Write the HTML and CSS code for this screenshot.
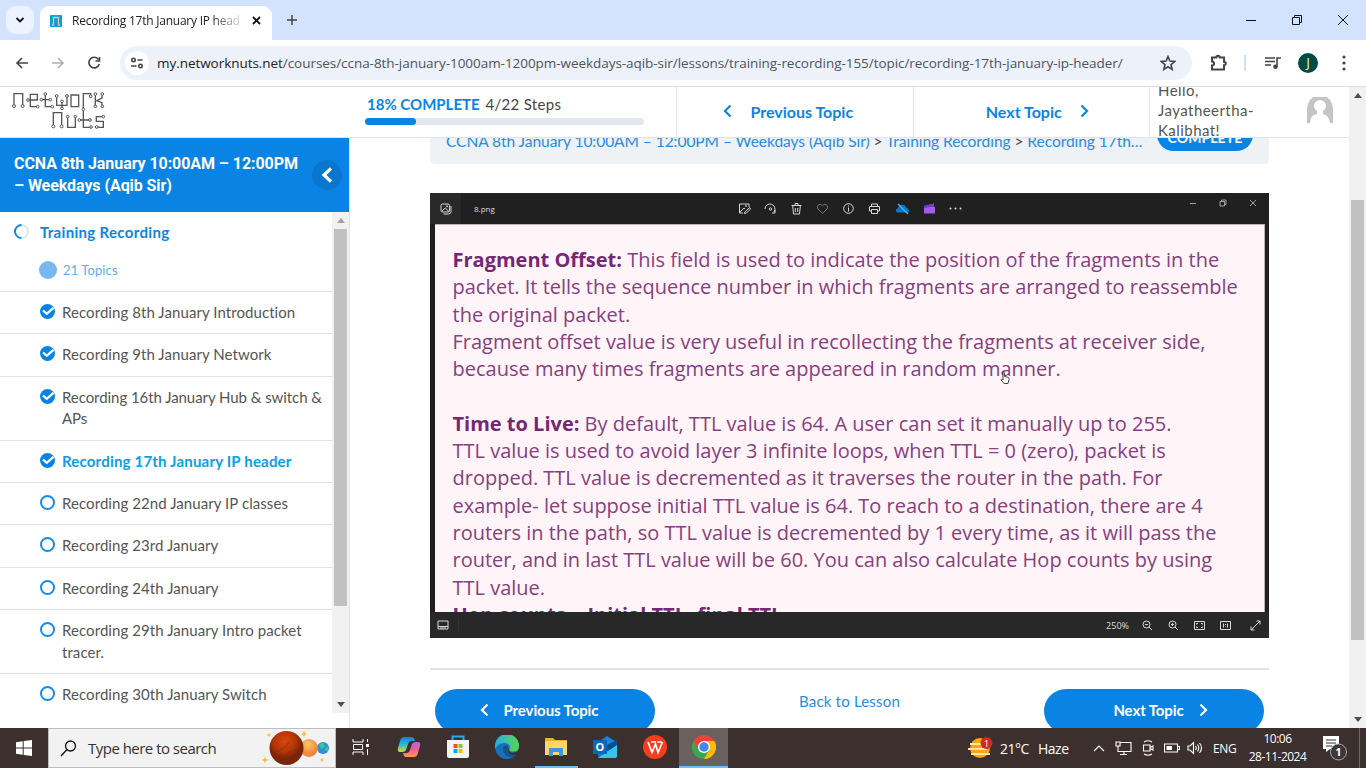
FILE: index.html
```html
<!DOCTYPE html>
<html lang="en">
<head>
<meta charset="utf-8">
<title>Recording 17th January IP header</title>
<link rel="stylesheet" href="styles.css">
</head>
<body>
<div class="tabs">
  <div class="tabmenu"><svg width="10" height="8" viewBox="0 0 10 8"><path d="M1.5 2 5 5.5 8.500 2" class="k2"/></svg></div>
  <div class="tab">
    <svg width="12" height="12" viewBox="0 0 12 12"><rect width="12" height="12" rx="1" fill="#049fdf"/><path d="M3.500 10V2.500H8.500V10M2 10H4M8 10H10" fill="none" stroke="#e9c6a0" stroke-width="1.300"/></svg>
    <span class="tabtitle">Recording 17th January IP head</span>
    <svg class="tabx" width="9" height="9" viewBox="0 0 9 9"><path d="M1 1 8 8M8 1 1 8" class="k2"/></svg>
  </div>
  <svg class="plus" width="12" height="12" viewBox="0 0 12 12"><path d="M6 1V11M1 6H11" fill="none" stroke="#444" stroke-width="1.500"/></svg>
  <div class="wincontrols">
    <svg width="12" height="12" viewBox="0 0 12 12"><path d="M1 6.500H11" class="k1"/></svg>
    <svg width="12" height="12" viewBox="0 0 12 12"><path d="M1.500 3.500H8.500V10.500H1.500ZM3.500 3.500V1.500H10.500V8.500H8.500" class="k1"/></svg>
    <svg width="12" height="12" viewBox="0 0 12 12"><path d="M1 1 11 11M11 1 1 11" class="k1"/></svg>
  </div>
</div>
<div class="toolbar">
  <svg width="14" height="12" viewBox="0 0 14 12"><path d="M13 6H2M7 1 2 6 7 11" class="nav"/></svg>
  <svg width="14" height="12" viewBox="0 0 14 12"><path d="M1 6H12M7 1 12 6 7 11" class="nav off"/></svg>
  <svg width="14" height="14" viewBox="0 0 14 14"><path d="M11.500 3.500A5.300 5.300 0 1 0 12.300 8M12.500 1V5H8.500" class="nav"/></svg>
  <div class="address">
    <div class="site"><svg width="14" height="12" viewBox="0 0 14 12"><g class="nav"><circle cx="3.500" cy="3" r="1.700"/><path d="M7.500 3H12.500M1 9H6.500"/><circle cx="10.500" cy="9" r="1.700"/></g></svg></div>
    <span class="url"><b>my.networknuts.net</b>/courses/ccna-8th-january-1000am-1200pm-weekdays-aqib-sir/lessons/training-recording-155/topic/recording-17th-january-ip-header/</span>
    <svg class="star" width="16" height="16" viewBox="0 0 16 16"><path d="M8 1.500 9.900 6.100 14.800 6.400 11 9.600 12.200 14.400 8 11.800 3.800 14.400 5 9.600 1.200 6.400 6.100 6.100Z" class="nav"/></svg>
  </div>
  <div class="tools">
    <svg width="18" height="18" viewBox="0 0 18 18"><path d="M2 3.500H6.300A1.700 1.700 0 0 1 9.700 3.500H14V7.700A1.700 1.700 0 0 1 14 11.300V15.500H2V11.500A2 2 0 0 0 2 7.500Z" class="nav ext"/></svg>
    <i class="toolsep"></i>
    <svg width="16" height="14" viewBox="0 0 16 14"><path d="M0 2H10M0 5.500H10M0 9H6M12 10.500V2H16" class="nav"/><circle cx="10.500" cy="10.800" r="2.300" fill="#444"/></svg>
    <span class="profile">J</span>
    <svg width="4" height="16" viewBox="0 0 4 16" fill="#444"><circle cx="2" cy="2" r="1.600"/><circle cx="2" cy="8" r="1.600"/><circle cx="2" cy="14" r="1.600"/></svg>
  </div>
</div>
<div class="page">
  <div class="view">
    <header class="head">
      <div class="logo">
        <svg width="97" height="40" viewBox="30 270 291 120" fill="none" stroke="#555" stroke-width="4">
          <path d="M42 314V281H68V314M87 300H112V283H91V320H112M127 299H148M136 284V320H154M170 292V316H201V292M186 306V322M213 285H236V320H213ZM250 324V281H272V287M286 286V320M306 286V294L290 302L306 308V316"/>
          <path d="M160 376V338H185V376M203 354V382H226V354M241 360H268M250 333V382H271M309 350H289V364H310V382H291"/>
          <g stroke-width="3" fill="#fff"><circle cx="42" cy="318" r="4.500"/><circle cx="68" cy="318" r="4.500"/><circle cx="84" cy="300" r="4"/><circle cx="113" cy="320" r="4"/><circle cx="124" cy="299" r="4"/><circle cx="151" cy="299" r="4"/><circle cx="136" cy="282" r="4"/><circle cx="157" cy="320" r="4"/><circle cx="170" cy="288" r="4"/><circle cx="201" cy="288" r="4"/><circle cx="186" cy="304" r="4"/><circle cx="186" cy="325" r="4"/><circle cx="272" cy="289" r="4"/><circle cx="250" cy="328" r="4"/><circle cx="286" cy="282" r="4"/><circle cx="307" cy="282" r="4"/><circle cx="286" cy="319" r="4"/><circle cx="307" cy="319" r="4"/><circle cx="160" cy="379" r="4.500"/><circle cx="185" cy="379" r="4.500"/><circle cx="203" cy="350" r="4"/><circle cx="226" cy="350" r="4"/><circle cx="238" cy="360" r="4"/><circle cx="270" cy="360" r="4"/><circle cx="273" cy="381" r="4"/><circle cx="310" cy="350" r="4"/><circle cx="290" cy="381" r="4"/></g>
        </svg>
      </div>
      <div class="progress"><div class="ptext"><b>18% COMPLETE</b> <span>4/22 Steps</span></div><div class="bar"><i></i></div></div>
      <div class="hnav prev"><svg width="9" height="14" viewBox="0 0 9 14"><path d="M7.500 1.500 2 7 7.500 12.500" class="chev"/></svg><span>Previous Topic</span></div>
      <div class="hnav next"><span>Next Topic</span><svg width="9" height="14" viewBox="0 0 9 14"><path d="M1.500 1.500 7 7 1.500 12.500" class="chev"/></svg></div>
      <div class="user"><span>Hello,<br>Jayatheertha-<br>Kalibhat!</span>
        <svg width="26" height="26" viewBox="0 0 26 26"><path d="M6 0H20Q26 5 26 13V26H23Q22 18 16 17V14Q19 12 19 9A6 6 0 0 0 7 9Q7 12 10 14V17Q3 18 3 26H0V13Q0 5 6 0Z" fill="#c4c4c4"/></svg></div>
    </header>
    <div class="body">
      <aside class="side">
        <div class="course"><h1>CCNA 8th January 10:00AM – 12:00PM<br>– Weekdays (Aqib Sir)</h1><span class="collapse"><svg width="12" height="16" viewBox="0 0 12 16"><path d="M10 1.500 3 8 10 14.500" fill="none" stroke="#fff" stroke-width="3.200"/></svg></span></div>
        <div class="scroll">
          <div class="list">
            <div class="lesson"><i class="ring"></i><b>Training Recording</b></div>
            <div class="count"><i></i>21 Topics</div>
            <div class="row"><svg class="done" viewBox="0 0 15 15"><circle cx="7.500" cy="7.500" r="7.500"/><path d="M3 6.500 6.700 9.800 13.500 3.800"/></svg><span>Recording 8th January Introduction</span></div>
            <div class="row"><svg class="done" viewBox="0 0 15 15"><circle cx="7.500" cy="7.500" r="7.500"/><path d="M3 6.500 6.700 9.800 13.500 3.800"/></svg><span>Recording 9th January Network</span></div>
            <div class="row"><svg class="done" viewBox="0 0 15 15"><circle cx="7.500" cy="7.500" r="7.500"/><path d="M3 6.500 6.700 9.800 13.500 3.800"/></svg><span class="tight">Recording 16th January Hub &amp; switch &amp;<br>APs</span></div>
            <div class="row current"><svg class="done" viewBox="0 0 15 15"><circle cx="7.500" cy="7.500" r="7.500"/><path d="M3 6.500 6.700 9.800 13.500 3.800"/></svg><span>Recording 17th January IP header</span></div>
            <div class="row"><i class="open"></i><span>Recording 22nd January IP classes</span></div>
            <div class="row"><i class="open"></i><span>Recording 23rd January</span></div>
            <div class="row"><i class="open"></i><span>Recording 24th January</span></div>
            <div class="row"><i class="open"></i><span>Recording 29th January Intro packet<br>tracer.</span></div>
            <div class="row"><i class="open"></i><span>Recording 30th January Switch</span></div>
          </div>
          <div class="track sidebar-track"><svg class="arr" viewBox="0 0 8 5"><path d="M0 5 4 0 8 5Z" fill="#a3a3a3"/></svg><i class="thumb"></i><svg class="arr" viewBox="0 0 8 5"><path d="M0 0 4 5 8 0Z" fill="#505050"/></svg></div>
        </div>
      </aside>
      <main class="main">
        <div class="crumbs"><div class="crumbtext"><a>CCNA 8th January 10:00AM – 12:00PM – Weekdays (Aqib Sir)</a> &gt; <a>Training Recording</a> &gt; <a>Recording 17th…</a></div><span class="status">COMPLETE</span></div>
        <div class="video">
          <div class="vtop">
            <div class="vapp"><svg width="12" height="12" viewBox="0 0 12 12" class="w"><path d="M2.500 1H8Q9.500 1 9.500 2.500V7.500Q9.500 9 8 9H2.500Q1 9 1 7.500V2.500Q1 1 2.500 1ZM1.500 8.500 5.200 5 9 8.500M11 3V8.500Q11 11 8.500 11H3.500"/><circle cx="7" cy="3.300" r=".6"/></svg></div>
            <span class="vname">8.png</span>
            <div class="vtools">
              <svg width="13" height="13" viewBox="0 0 13 13" class="w"><path d="M11 5V2H1.500V11H5M2 10 6 6 7 7M6 11 11.500 5.500 12.500 7 8 11.500Z"/><circle cx="8" cy="4" r=".5"/></svg>
              <svg width="13" height="13" viewBox="0 0 13 13" class="w"><path d="M1 7A5 5 0 1 1 10 10M8 11H11V8"/><circle cx="6.500" cy="7" r="1.200"/></svg>
              <svg width="13" height="13" viewBox="0 0 13 13" class="w"><path d="M1.500 3.500H11.500M5 3V1.500H8V3M2.700 4 3.500 12H9.500L10.300 4M5.300 6V10M7.700 6V10"/></svg>
              <svg width="13" height="13" viewBox="0 0 13 13" class="w dim"><path d="M6.500 11.500 2 7Q.5 4.500 2.500 2.800 5 1.300 6.500 3.800 8 1.300 10.500 2.800 12.500 4.500 11 7Z"/></svg>
              <svg width="13" height="13" viewBox="0 0 13 13" class="w"><circle cx="6.500" cy="6.500" r="4.800"/><path d="M6.500 5.500V9.500M6.500 3.500V4.500"/></svg>
              <svg width="13" height="13" viewBox="0 0 13 13" class="w"><path d="M3.500 4V2H9.500V4M3.500 9H1.500V4.500H11.500V9H9.500M3.500 7.500H9.500V11.500H3.500Z"/></svg>
              <svg width="15" height="13" viewBox="0 0 15 13"><path d="M2 10.500Q-.5 8 3 6 4 2 7.500 3 10 2 11 5.500 15 6.500 13.500 10.500Z" fill="#0878c8"/><path d="M3 2 13 12" stroke="#56b4ec" stroke-width="1.200"/></svg>
              <svg width="13" height="13" viewBox="0 0 13 13"><path d="M1 4 11 1.500V5H12V11.500H1Z" fill="#a45bea"/><path d="M1 4 11 1.500V4.500L1 6Z" fill="#6b3fc5"/></svg>
              <svg width="13" height="13" viewBox="0 0 13 13" fill="#ddd"><circle cx="1.500" cy="6.500" r="1"/><circle cx="6.500" cy="6.500" r="1"/><circle cx="11.500" cy="6.500" r="1"/></svg>
            </div>
            <div class="vwin"><svg width="8" height="8" viewBox="0 0 8 8" class="w"><path d="M1 4.500H7"/></svg><svg width="8" height="8" viewBox="0 0 8 8" class="w"><path d="M1 2.500H5.500V7H1ZM2.500 2.500V1H7V5.500H5.500"/></svg><svg width="8" height="8" viewBox="0 0 8 8" class="w"><path d="M1 1 7 7M7 1 1 7"/></svg></div>
          </div>
          <div class="slide"><b>Fragment Offset:</b> This field is used to indicate the position of the fragments in the<br>packet. It tells the sequence number in which fragments are arranged to reassemble<br>the original packet.<br>Fragment offset value is very useful in recollecting the fragments at receiver side,<br>because many times fragments are appeared in random manner.<br><br><b>Time to Live:</b> By default, TTL value is 64. A user can set it manually up to 255.<br>TTL value is used to avoid layer 3 infinite loops, when TTL = 0 (zero), packet is<br>dropped. TTL value is decremented as it traverses the router in the path. For<br>example- let suppose initial TTL value is 64. To reach to a destination, there are 4<br>routers in the path, so TTL value is decremented by 1 every time, as it will pass the<br>router, and in last TTL value will be 60. You can also calculate Hop counts by using<br>TTL value.<br><b class="cutline">Hop counts = Initial TTL- final TTL</b>
            <svg class="hand" width="10" height="14" viewBox="0 0 10 14"><path d="M3 8V1.500Q3.700.3 4.400 1.500V5.500L8 6.300Q9.300 6.700 9 8.500L8 12.500H4L1 8.800Q1.200 7.500 3 9Z" fill="#fff" stroke="#333" stroke-width=".9"/></svg>
          </div>
          <div class="vbot">
            <svg width="12" height="10" viewBox="0 0 12 10" class="w"><path d="M1 1H11V9H1ZM1 6.500H11M3 8H9"/></svg><i class="vsep"></i>
            <span class="vzoom">250%</span>
            <svg width="11" height="11" viewBox="0 0 11 11" class="w"><circle cx="4.500" cy="4.500" r="3.500"/><path d="M7 7 10 10M3 4.500H6"/></svg>
            <svg width="11" height="11" viewBox="0 0 11 11" class="w"><circle cx="4.500" cy="4.500" r="3.500"/><path d="M7 7 10 10M3 4.500H6M4.500 3V6"/></svg>
            <svg width="11" height="11" viewBox="0 0 11 11" class="w"><path d="M.5 1.500H10.500V9.500H.5ZM2.500 4.500V3.500H4M7 3.500H8.500V4.500M8.500 6.500V7.500H7M4 7.500H2.500V6.500"/></svg>
            <svg width="11" height="11" viewBox="0 0 11 11" class="w"><path d="M.5 1.500H10.500V9.500H.5ZM3.500 3.500V7.500M7.500 3.500V7.500M5.500 4V5M5.500 6.500V7"/></svg>
            <svg width="11" height="11" viewBox="0 0 11 11" class="w last"><path d="M1 10 10 1M6.500 1H10V4.500M1 6.500V10H4.500"/></svg>
          </div>
        </div>
        <div class="actions">
          <span class="btn prev"><svg width="9" height="14" viewBox="0 0 9 14"><path d="M7.500 1.500 2 7 7.500 12.500" class="chev"/></svg>Previous Topic</span>
          <a class="back">Back to Lesson</a>
          <span class="btn next">Next Topic<svg width="9" height="14" viewBox="0 0 9 14"><path d="M1.500 1.500 7 7 1.500 12.500" class="chev"/></svg></span>
        </div>
      </main>
    </div>
  </div>
  <div class="track page-track"><svg class="arr" viewBox="0 0 8 5"><path d="M0 5 4 0 8 5Z" fill="#505050"/></svg><i class="thumb"></i><svg class="arr" viewBox="0 0 8 5"><path d="M0 0 4 5 8 0Z" fill="#505050"/></svg></div>
</div>
<footer class="taskbar">
  <div class="start"><svg width="16" height="16" viewBox="0 0 16 16" fill="#fff"><path d="M0 2.200 6.700 1.200V7.500H0ZM7.700 1.100 16 0V7.500H7.700ZM0 8.500H6.700V14.800L0 13.800ZM7.700 8.500H16V16L7.700 14.900Z"/></svg></div>
  <div class="search">
    <svg width="17" height="17" viewBox="0 0 17 17"><circle cx="10.500" cy="6" r="5" class="k15"/><path d="M7 9.500 1 16" class="k15"/></svg>
    <span>Type here to search</span>
    <svg class="planets" width="70" height="38" viewBox="0 0 70 38">
      <defs><radialGradient id="mars" cx=".45" cy=".3"><stop offset="0" stop-color="#d44a10"/><stop offset=".65" stop-color="#b23505"/><stop offset="1" stop-color="#7b2408"/></radialGradient><radialGradient id="venus" cx=".45" cy=".3"><stop offset="0" stop-color="#ffc765"/><stop offset="1" stop-color="#ef893f"/></radialGradient></defs>
      <circle cx="61" cy="19" r="6" fill="#2b8fe0"/><path d="M57 15 61 14 63 18 59 20ZM62 21 66 17 66 22Z" fill="#41c58c"/><circle cx="47" cy="19" r="9" fill="url(#venus)"/><circle cx="24.500" cy="19" r="17" fill="url(#mars)"/><path d="M12 24Q21 22 27 13M20 30Q27 20 37 21" stroke="#8e2c08" stroke-width="1.200" fill="none" opacity=".6"/>
      <path d="M3 27.500 4 30 6.500 31 4 32 3 34.500 2 32-.5 31 2 30ZM42 1.500 43 4 45 5 43 6 42 8 41 6 39 5 41 4ZM7 4 8 5.500 9.500 6 8 6.500 7 8 6 6.500 4.500 6 6 5.500ZM60 29 61 30.500 62.500 31 61 31.500 60 33 59 31.500 57.500 31 59 30.500Z" fill="#eebf43"/>
    </svg>
  </div>
  <div class="apps">
    <span><svg width="17" height="16" viewBox="0 0 17 16"><path d="M1 0V3H11V0M1 16V13H11V16M1.500 5.500H10.500V10.500H1.500ZM15.500 0V3M15.500 10V16" fill="none" stroke="#fff"/><path d="M14 5H17V8H14Z" fill="#fff"/></svg></span>
    <span><svg width="24" height="22" viewBox="0 0 24 22"><defs><linearGradient id="cpa" x2="0" y2="1"><stop stop-color="#2475dd"/><stop offset=".5" stop-color="#25bfcd"/><stop offset="1" stop-color="#e5d33a"/></linearGradient><linearGradient id="cpb" x2="0" y2="1"><stop stop-color="#a96be8"/><stop offset=".5" stop-color="#ef5b91"/><stop offset="1" stop-color="#ff9e52"/></linearGradient></defs><path d="M7 1H15Q17 1 18 5H14Q12 5 11 8L9 14Q8 16 5 16H3Q0 16 1 12L3 5Q4 1 7 1Z" fill="url(#cpa)"/><path d="M17 21H9Q7 21 6 17H10Q12 17 13 14L15 8Q16 6 19 6H21Q24 6 23 10L21 17Q20 21 17 21Z" fill="url(#cpb)"/></svg></span>
    <span><svg width="24" height="24" viewBox="0 0 24 24"><path d="M6.500 6V1.500H17.500V6" fill="none" stroke="#27a9e6" stroke-width="2"/><path d="M1 5H23V21Q23 23 21 23H3Q1 23 1 21Z" fill="#f3f3f3"/><path d="M7.500 9H11.500V13H7.500Z" fill="#f1511b"/><path d="M12.500 9H16.500V13H12.500Z" fill="#80cc28"/><path d="M7.500 14H11.500V18H7.500Z" fill="#00adef"/><path d="M12.500 14H16.500V18H12.500Z" fill="#fbbc09"/></svg></span>
    <span><svg width="24" height="24" viewBox="0 0 24 24"><defs><linearGradient id="edge"><stop stop-color="#26aee8"/><stop offset="1" stop-color="#59d84e"/></linearGradient></defs><circle cx="12" cy="12" r="12" fill="#1b70bd"/><path d="M0 11A12 12 0 0 1 24 11Q24 17 17 16.500 13 16 15 13 15 8 9 8 3 8 0 14Z" fill="url(#edge)"/><path d="M8 12Q7 20 15 22.500 20 22 22.500 17.500 18 20 14 17.500 11 15 13.500 11.500 10 9 8 12Z" fill="#15558f"/><path d="M13.800 12Q13 17 17 17.800 21 18 24 15V20H17Q11 17 13.800 12Z" fill="#3b302e"/></svg></span>
    <span class="running"><svg width="22" height="20" viewBox="0 0 22 20"><path d="M0 1H8L10 3H22V18H0Z" fill="#eab12d"/><path d="M0 4H22V18H0Z" fill="#ffd765"/><path d="M4 19V11H18V19H14V15H8V19Z" fill="#3c99dc"/></svg></span>
    <span><svg width="24" height="22" viewBox="0 0 24 22"><path d="M5 6 14 0 24 6V20Q24 22 22 22H7Q5 22 5 20Z" fill="#1379cf"/><path d="M7 6 14 1 22 6 14 11Z" fill="#1c86d8"/><path d="M14 9 24 4V10L14 15Z" fill="#0b4d93"/><path d="M5 22 24 9V20Q24 22 22 22Z" fill="#35c3ef"/><path d="M0 4H14V18H0Z" fill="#0967bd"/><text x="7" y="15" class="oletter">O</text></svg></span>
    <span><svg width="24" height="24" viewBox="0 0 24 24"><circle cx="12" cy="12" r="12" fill="#fa3c18"/><path d="M5 7 9 17.500 12.500 9 15 17.500 19.500 7M8 7H13M14 7H19" fill="none" stroke="#fff" stroke-width="1.700"/></svg></span>
    <span class="running active"><svg width="24" height="24" viewBox="0 0 24 24"><circle cx="12" cy="12" r="12" fill="#eb4335"/><path d="M1.600 6A12 12 0 0 0 12 24L17.200 15 6.800 15Z" fill="#34a853"/><path d="M22.400 6A12 12 0 0 1 12 24L17.200 15 12 6Z" fill="#fbbc04"/><circle cx="12" cy="12" r="6" fill="#fff"/><circle cx="12" cy="12" r="4.700" fill="#4285f4"/></svg></span>
  </div>
  <div class="tray">
    <svg class="weather" width="25" height="22" viewBox="0 0 25 22"><circle cx="12" cy="11" r="10" fill="#f7a51d"/><path d="M2 7H14M0 12H19M3 17H22" stroke="#ffe4a0" stroke-width="2"/><circle cx="18.500" cy="6" r="6" fill="#ce2a20"/><text x="18.500" y="9.500" class="badge">1</text></svg>
    <span class="temp">21°C</span><span class="haze">Haze</span>
    <svg class="up" width="12" height="8" viewBox="0 0 12 8"><path d="M1 7 6 2 11 7" class="t"/></svg>
    <svg class="net" width="17" height="14" viewBox="0 0 17 14"><path d="M5 1.500H16V10.500H3V6M9 11V13M5 13.500H12M1 1H5V5H1ZM3 5V8" class="t"/></svg>
    <svg class="cam" width="12" height="16" viewBox="0 0 12 16"><path d="M1.500 5H8V11H1.500ZM8 7.500 11 6V10L8 8.500M2 2Q6-.5 10 2M2 14Q6 16.500 10 14" class="t"/></svg>
    <svg class="bat" width="16" height="10" viewBox="0 0 16 10"><path d="M.5 1H13.500V9H.5ZM14 3.500H15.500V6.500H14" class="t"/><path d="M2.500 3H8V7H2.500Z" fill="#fff"/></svg>
    <svg class="vol" width="16" height="14" viewBox="0 0 16 14"><path d="M1 5H3L6.500 1.500V12.500L3 9H1ZM8.500 5Q10 7 8.500 9M10.500 3.500Q13 7 10.500 10.500M12.500 2Q16.500 7 12.500 12" class="t"/></svg>
    <span class="lang">ENG</span>
    <span class="clock">10:06<br>28-11-2024</span>
    <span class="note"><svg width="25" height="25" viewBox="0 0 25 25"><path d="M0 0H16V13H7L3 16V13H0Z" fill="#fff"/><path d="M3 4H13M3 7H13M3 10H9" stroke="#3b302e"/><circle cx="15.500" cy="16" r="8" fill="#3c3736" stroke="#aaa"/><text x="15.500" y="20" class="badge big">1</text></svg></span>
    <i class="desktop"></i>
  </div>
</footer>
</body>
</html>
```
FILE: styles.css
```css
* { box-sizing: border-box; }
body { margin: 0; width: 1366px; height: 768px; overflow: hidden; display: flex; flex-direction: column; background: #fff; font-family: Lato, "Open Sans", sans-serif; white-space: nowrap; }
svg { display: block; flex: none; }
.k1, .k2, .k15 { fill: none; stroke: #111; stroke-width: 1; }
.k2 { stroke-width: 1.8; }
.k15 { stroke-width: 1.3; }
.nav { fill: none; stroke: #444; stroke-width: 1.6; }
.off { stroke: #b0b0b0; }
.ext { stroke-width: 2; }
.w { fill: none; stroke: #d8d8d8; stroke-width: 1; }
.dim { stroke: #777; }
.t { fill: none; stroke: #fff; stroke-width: 1.1; }

.tabs { height: 40px; flex: none; display: flex; align-items: center; background: #d3e2fd; padding-left: 6px; font-family: "Open Sans", sans-serif; }
.tabmenu { width: 28px; height: 28px; border-radius: 9px; background: #ecf2fe; display: grid; place-items: center; }
.tab { height: 34px; width: 232px; margin: 6px 0 0 6px; background: #fff; border-radius: 9px 9px 0 0; display: flex; align-items: center; padding: 0 11px 5px 10px; }
.tabtitle { width: 170px; margin-left: 10px; font-size: 12px; letter-spacing: -.24px; color: #222; overflow: hidden; -webkit-mask-image: linear-gradient(90deg, #000 82%, #0003 98%); mask-image: linear-gradient(90deg, #000 82%, #0003 98%); }
.tabx { margin-left: 10px; }
.plus { margin-left: 14px; }
.wincontrols { margin-left: auto; display: flex; gap: 34px; padding-right: 17px; }

.toolbar { height: 47px; flex: none; display: flex; align-items: center; border-bottom: 1px solid #dcdee2; padding-left: 15px; gap: 22px; background: #fff; }
.address { width: 1072px; height: 34px; border-radius: 17px; background: #ecf1fa; margin-left: -3px; display: flex; align-items: center; padding-left: 5px; }
.site { width: 24px; height: 24px; border-radius: 50%; background: #fff; display: grid; place-items: center; }
.url { margin-left: 8px; width: 975px; font: 13.5px "Open Sans", sans-serif; letter-spacing: -.05px; color: #50545c; }
.url b { font-weight: 400; color: #1f2023; }
.star { margin-left: 28px; }
.tools { display: flex; align-items: center; margin-left: -4px; }
.toolsep { width: 2px; height: 16px; background: #cfe0fc; margin: 0 19px 0 16px; }
.profile { width: 20px; height: 20px; border-radius: 50%; background: #004d40; color: #fff; font: 12px/20px "Open Sans", sans-serif; text-align: center; margin: 0 24px 0 17px; }

.page { height: 641px; display: flex; overflow: hidden; }
.view { width: 1349px; display: flex; flex-direction: column; }
.head { height: 51px; flex: none; display: flex; border-bottom: 1px solid #dfe4ec; overflow: hidden; }
.logo { width: 350px; padding: 3px 0 0 10px; }
.progress { width: 326px; padding: 7px 0 0 15px; }
.ptext { font-size: 15px; line-height: 20px; color: #444; padding-left: 2px; }
.ptext b { color: #0a84e4; letter-spacing: 0; margin-right: 2px; }
.ptext span { letter-spacing: .3px; }
.bar { height: 7px; width: 279px; margin-top: 4px; border-radius: 4px; background: #e2e7ed; }
.bar i { display: block; width: 18.3%; height: 7px; border-radius: 4px; background: #0a84e4; }
.chev { fill: none; stroke: currentColor; stroke-width: 2.2; }
.hnav { width: 236.5px; display: flex; align-items: center; justify-content: center; gap: 18px; border-left: 1px solid #dfe4ec; color: #0a84e4; font-weight: 700; font-size: 16px; padding-bottom: 2px; }
.hnav.prev { padding-right: 13px; }
.hnav.next { padding-left: 12px; }
.user { width: 200px; height: 50px; border-left: 1px solid #dfe4ec; padding: 0 16px 0 8px; display: flex; align-items: center; justify-content: space-between; font-size: 15px; line-height: 20px; letter-spacing: .45px; color: #555; }
.user svg { margin-top: -4px; }
.user span { margin-top: -4px; }

.body { height: 590px; display: flex; }
.side { width: 350px; border-right: 1px solid #dfe4e8; }
.course { height: 74px; background: #0a84e4; display: flex; justify-content: space-between; align-items: center; padding: 0 7px 0 14px; color: #fff; }
.course h1 { margin: -1px 0 0; font: 700 16px/22px Roboto, sans-serif; letter-spacing: -.07px; }
.collapse { width: 30px; height: 30px; border-radius: 50%; background: #0977cd; display: grid; place-items: center; }
.scroll { height: 501px; display: flex; }
.list { width: 332px; overflow: hidden; }
.lesson { height: 39px; display: flex; align-items: center; padding-left: 14px; gap: 11px; color: #0a84e4; font-size: 15px; letter-spacing: .32px; }
.ring { width: 15px; height: 15px; border-radius: 50%; border: 2px solid #dfe5ee; border-left-color: #0a84e4; border-bottom-color: #0a84e4; transform: rotate(45deg); }
.count { height: 40px; display: flex; align-items: center; padding: 0 0 2px 39px; gap: 6px; color: #62aeec; font-size: 13px; letter-spacing: .1px; }
.count i { width: 18px; height: 18px; border-radius: 50%; background: #76b8ef; }
.row { display: flex; gap: 7px; border-top: 1px solid #e2e2e2; padding: 11px 0 9px 40px; font-size: 15px; line-height: 21.4px; letter-spacing: .07px; color: #555; }
.row span { margin: -1px 0 1px; }
.tight { letter-spacing: -.06px; }
.done, .open { width: 15px; height: 15px; margin-top: 1px; }
.done circle { fill: #0a84e4; }
.done path { fill: none; stroke: #fff; stroke-width: 2.3; }
.open { border: 2px solid #168bea; border-radius: 50%; flex: none; }
.current { color: #08a0e9; font-weight: 700; letter-spacing: .19px; }
.track { display: flex; flex-direction: column; align-items: center; background: #f1f1f1; }
.track .arr { width: 8px; height: 5px; margin: 6px 0; }
.track .thumb { width: 13px; background: #c1c1c1; }
.sidebar-track { width: 17px; height: 501px; }
.sidebar-track .thumb { height: 377px; }
.track .arr:last-child { margin-top: auto; }
.page-track { width: 17px; height: 641px; }
.page-track .thumb { height: 440px; margin-top: 96px; }

.main { width: 999px; height: 590px; overflow: hidden; padding: 0 80px; }
.crumbs { height: 26px; background: #eff2f5; border-radius: 0 0 5px 5px; padding-left: 16px; display: flex; }
.crumbtext { width: 711px; font-size: 15.5px; line-height: 20px; margin-top: -7.5px; letter-spacing: -.04px; color: #444; }
.crumbtext a, .back { color: #278ce3; }
.status { width: 96px; height: 33px; margin-top: -20px; border-radius: 17px; background: #0a84e4; color: #fff; font: 700 14px/39px Lato, sans-serif; letter-spacing: .1px; text-align: center; }
.video { height: 445px; margin-top: 29px; background: #202020; padding: 0 4px 0 5px; display: flex; flex-direction: column; font-family: "Open Sans", sans-serif; }
.vtop { height: 31px; display: flex; align-items: center; }
.vapp { width: 31px; margin-left: -5px; padding-left: 10px; height: 31px; display: flex; align-items: center; background: #292929; }
.vname { width: 254px; padding-left: 13px; font-size: 8px; color: #ddd; }
.vtools { width: 236px; display: flex; align-items: center; gap: 13.1px; margin-left: 23px; }
.vwin { margin-left: auto; display: flex; gap: 22px; padding: 0 8px 11px 0; opacity: .7; }
.slide { position: relative; height: 388px; width: 830px; overflow: hidden; background: #fff5f9; border-top: 1px solid #b9b3b5; border-right: 1px solid #b9b3b5; padding: 21px 0 0 17.5px; font-size: 20px; line-height: 27.3px; color: #85407f; }
.slide b { color: #732774; }
.cutline { display: inline-block; margin-top: -1px; }
.hand { position: absolute; left: 565px; top: 146px; }
.vbot { height: 26px; margin: 0 -4px 0 -5px; padding: 0 8px 0 7px; background: #282828; display: flex; align-items: center; gap: 15px; }
.vsep { width: 1px; height: 14px; background: #333; margin-left: -6px; }
.vzoom { margin-left: auto; font-size: 9px; color: #ddd; margin-right: -2px; }
.last { margin-left: 4px; }
.actions { margin-top: 30px; border-top: 2px solid #e2e2e2; padding: 19px 5px 0; display: flex; justify-content: space-between; }
.btn { width: 220px; height: 44px; border-radius: 22px; background: #0a84e4; color: #fff; display: flex; align-items: center; justify-content: center; gap: 15px; padding-bottom: 3px; font-size: 15px; font-weight: 700; letter-spacing: -.1px; }
.btn.prev { padding-right: 12px; }
.btn.next { padding-left: 13px; }
.back { font-size: 15px; line-height: 25px; letter-spacing: .2px; }

.taskbar { height: 40px; flex: none; display: flex; background: #3b302e; color: #fff; font-family: "Open Sans", sans-serif; }
.start { width: 48px; display: grid; place-items: center; }
.search { width: 288px; border: 1px solid #bdbdbd; background: #f2f2f2; display: flex; align-items: center; padding-left: 11px; }
.search span { width: 164px; margin-left: 11px; font-size: 15px; letter-spacing: -.52px; color: #333; }
.planets { margin-left: 10px; }
.apps { display: flex; }
.apps span { width: 49.2px; height: 40px; display: grid; place-items: center; border-bottom: 2px solid transparent; }
.apps span:first-child { width: 48px; }
.apps .running { border-image: linear-gradient(90deg, transparent 8%, #76b9ed 8%, #76b9ed 92%, transparent 92%) 1; border-width: 0 0 2px; border-style: solid; }
.apps .active { background: #696160; border-image: none; border-bottom: 2px solid #76b9ed; }
.oletter { font: 700 11px "Open Sans", sans-serif; fill: #fff; text-anchor: middle; }
.badge { font: 9px "Open Sans", sans-serif; fill: #fff; text-anchor: middle; }
.big { font-size: 11px; font-weight: 700; }
.tray { margin-left: auto; display: flex; align-items: center; width: 398px; }
.temp { margin-left: 7px; width: 38px; font-size: 14px; letter-spacing: -.5px; }
.haze { width: 55px; font-size: 14px; letter-spacing: -.5px; }
.net { margin-left: 10px; }
.cam { margin-left: 10px; }
.bat { margin-left: 10px; }
.vol { margin-left: 7px; }
.lang { margin-left: 10px; font-size: 12px; letter-spacing: -.3px; }
.clock { width: 66px; margin-left: 8px; font-size: 12px; line-height: 18px; letter-spacing: -.5px; text-align: center; }
.note { margin-left: 12px; }
.desktop { width: 1px; height: 40px; background: #736b69; margin-left: 11px; }
```
